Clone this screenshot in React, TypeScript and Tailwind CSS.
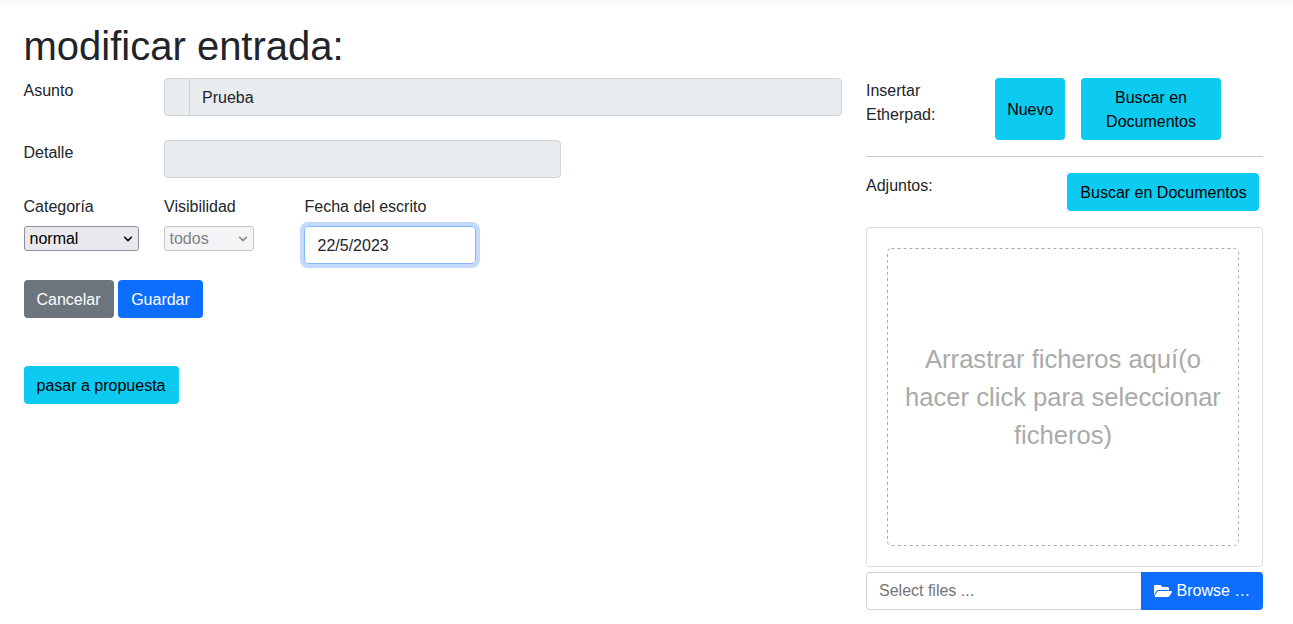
import type { ReactNode } from "react";
import { FaFolderOpen } from "react-icons/fa";
import clsx from "clsx";

const tones = {
  info: "bg-[#0dcaf0] text-black",
  primary: "bg-[#0d6efd] text-white",
  secondary: "bg-[#6c757d] text-white",
};

function Button({ tone, className, children }: { tone: keyof typeof tones; className?: string; children: ReactNode }) {
  return (
    <button type="button" className={clsx("shrink-0 rounded-[4px] pt-2 pb-[6px] text-center", tones[tone], className)}>
      {children}
    </button>
  );
}

function Picker({ value, disabled, className }: { value: string; disabled?: boolean; className: string }) {
  return (
    <button
      type="button"
      disabled={disabled}
      className={clsx(
        "flex h-[25px] items-center justify-between rounded-[3px] border pr-[5px] pl-[4.5px]",
        disabled ? "border-[#c5c5cb] bg-[#f4f4f6] text-[#808084]" : "border-[#8f8f9d] bg-[#e9e9ed] text-black",
        className,
      )}
    >
      <span>{value}</span>
      <svg className="mt-px h-[10px] w-[10px]" viewBox="0 0 10 10" fill="none" stroke="currentColor" strokeWidth="1.5">
        <path d="M1.2 2.8 L5 6.6 L8.8 2.8" />
      </svg>
    </button>
  );
}

export default function App() {
  return (
    <div className="h-[624px] w-[1293px] overflow-hidden bg-white font-['Liberation_Sans',Arial,sans-serif] text-base leading-6 text-[#212529]">
      <div className="h-[8px] bg-linear-to-b from-[#f7f7f7] to-white" />
      <main className="px-6 pt-[14px]">
        <h1 className="-ml-[0.5px] mb-2 text-[40px] leading-[48px]">modificar entrada:</h1>
        <div className="flex gap-6">
          <section className="w-[818px]">
            <div className="flex h-[62px] items-start">
              <label className="-ml-[0.5px] w-[140.5px] pt-px">Asunto</label>
              <div className="flex h-[38px] flex-1 rounded-[4px] border border-[#ced4da] bg-[#e9ecef]">
                <span className="w-[25px] border-r border-[#ced4da]" />
                <span className="px-3 pt-[7px]">Prueba</span>
              </div>
            </div>
            <div className="flex h-[54px] items-start">
              <label className="-ml-[0.5px] w-[140.5px] pt-px">Detalle</label>
              <div className="h-[38px] w-[397px] rounded-[4px] border border-[#ced4da] bg-[#e9ecef]" />
            </div>
            <div className="flex h-[86px] items-start">
              <div className="w-[140px]">
                <label className="-ml-[0.5px] mb-[7px] block pt-px">Categoría</label>
                <Picker value="normal" className="w-[115px]" />
              </div>
              <div className="w-[140px]">
                <label className="mb-[7px] block pt-px">Visibilidad</label>
                <Picker value="todos" disabled className="w-[90px]" />
              </div>
              <div>
                <label className="mb-[7px] block pt-px pl-[0.5px]">Fecha del escrito</label>
                <input
                  readOnly
                  value="22/5/2023"
                  className="block h-[38px] w-[172px] rounded-[4px] border border-[#86b7fe] pt-[2px] pl-[12.5px] shadow-[0_0_0_4px_#c2dafe] outline-none"
                />
              </div>
            </div>
            <div className="flex gap-1">
              <Button tone="secondary" className="w-[90px] pr-px">Cancelar</Button>
              <Button tone="primary" className="w-[85px]">Guardar</Button>
            </div>
            <Button tone="info" className="mt-12 w-[155px] pr-px">pasar a propuesta</Button>
          </section>

          <aside className="w-[397px]">
            <div className="flex h-[62px]">
              <label className="w-[129px] pt-px pr-[40px]">Insertar Etherpad:</label>
              <Button tone="info" className="mr-4 w-[70px] pl-[0.5px]">Nuevo</Button>
              <Button tone="info" className="w-[140px] px-[13px]">Buscar en Documentos</Button>
            </div>
            <hr className="my-4 border-[#c7c8c9]" />
            <div className="flex items-start justify-between pr-1">
              <label className="pt-px">Adjuntos:</label>
              <Button tone="info" className="w-[192px] pl-px">Buscar en Documentos</Button>
            </div>
            <div className="mt-4 h-[340px] rounded-[4px] border border-[#dddddd] py-5 pr-[23px] pl-5">
              <div className="relative flex h-[298px] items-center justify-center px-3 text-center text-[25.6px] leading-[38px] text-[#aaaaaa]">
                <svg className="absolute inset-0 h-full w-full" viewBox="0 0 352 298" fill="none">
                  <rect x="0.5" y="0.5" width="351" height="297" rx="4" stroke="#aaaaaa" strokeDasharray="3 3" />
                </svg>
                <p>Arrastrar ficheros aquí(o hacer click para seleccionar ficheros)</p>
              </div>
            </div>
            <div className="mt-[5px] flex h-[38px]">
              <input
                readOnly
                placeholder="Select files ..."
                className="min-w-0 flex-1 rounded-l-[4px] border border-r-0 border-[#ced4da] px-3 pb-px outline-none placeholder:text-[#757575]"
              />
              <button type="button" className="flex w-[122px] items-center rounded-r-[4px] bg-[#0d6efd] pl-[13px] text-white">
                <FaFolderOpen className="mr-[4.5px] h-4 w-[18px]" />
                <span className="pb-px">Browse …</span>
              </button>
            </div>
          </aside>
        </div>
      </main>
    </div>
  );
}
